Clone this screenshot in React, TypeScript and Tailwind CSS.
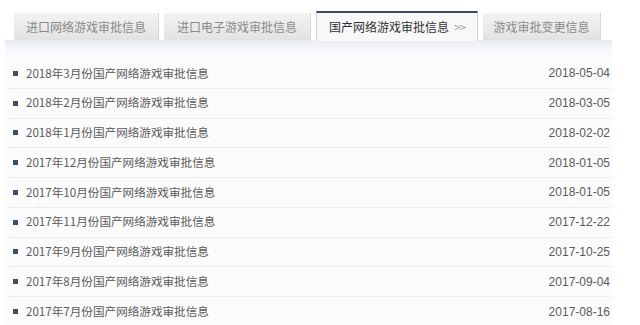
const tabs = [
  { label: "进口网络游戏审批信息", w: "w-[145px]" },
  { label: "进口电子游戏审批信息", w: "w-[147px]" },
];

const rows = [
  ["2018年3月份国产网络游戏审批信息", "2018-05-04"],
  ["2018年2月份国产网络游戏审批信息", "2018-03-05"],
  ["2018年1月份国产网络游戏审批信息", "2018-02-02"],
  ["2017年12月份国产网络游戏审批信息", "2018-01-05"],
  ["2017年10月份国产网络游戏审批信息", "2018-01-05"],
  ["2017年11月份国产网络游戏审批信息", "2017-12-22"],
  ["2017年9月份国产网络游戏审批信息", "2017-10-25"],
  ["2017年8月份国产网络游戏审批信息", "2017-09-04"],
  ["2017年7月份国产网络游戏审批信息", "2017-08-16"],
];

function InactiveTab({ label, w }: { label: string; w: string }) {
  return (
    <div
      className={`${w} h-[27px] flex items-center justify-center bg-gradient-to-b from-[#f3f3f3] to-[#e2e2e2] border-r border-[#d6d6d6] text-[12px] text-[#8a8a8a]`}
    >
      {label}
    </div>
  );
}

export default function App() {
  return (
    <div className="w-[640px] h-[325px] overflow-hidden bg-white font-['Microsoft_YaHei','Noto_Sans_CJK_SC',sans-serif]">
      {/* Tabs */}
      <div className="flex items-end pt-[10px] pl-[14px] gap-[5px] h-[40px]">
        {tabs.map((t) => (
          <InactiveTab key={t.label} label={t.label} w={t.w} />
        ))}
        <div className="w-[162px] h-[30px] flex items-center justify-center bg-[#f7f8fa] border-t-2 border-[#3b4a61] border-x border-x-[#d0d4db] text-[12px] text-[#333] mb-[-1px] relative z-10">
          国产网络游戏审批信息
          <span className="ml-[5px] text-[#777] font-light tracking-[-1px]">&gt;&gt;</span>
        </div>
        <InactiveTab label="游戏审批变更信息" w="w-[118px]" />
      </div>

      {/* Panel */}
      <div className="ml-[5px] w-[607px] bg-gradient-to-b from-[#e8ebf2] via-[#f6f7fa] to-[#fafbfc] h-[18px]" />
      <div className="ml-[5px] w-[607px] bg-[#fbfbfc] pt-[1px]">
        {rows.map(([title, date], i) => (
          <div
            key={i}
            className={`flex items-center justify-between h-[29.75px] ml-[3px] pl-[5px] pr-[2px] ${
              i < rows.length - 1 ? "border-b border-dotted border-[#e0e0e0]" : ""
            }`}
          >
            <div className="flex items-center gap-[8px]">
              <span className="w-[5px] h-[5px] bg-[#3c4c69]" />
              <span className="text-[11.6px] text-[#5a5a5a]">{title}</span>
            </div>
            <span className="text-[12px] text-[#5a5a5a] font-['Liberation_Sans','Noto_Sans_CJK_SC',sans-serif]">
              {date}
            </span>
          </div>
        ))}
      </div>
    </div>
  );
}
